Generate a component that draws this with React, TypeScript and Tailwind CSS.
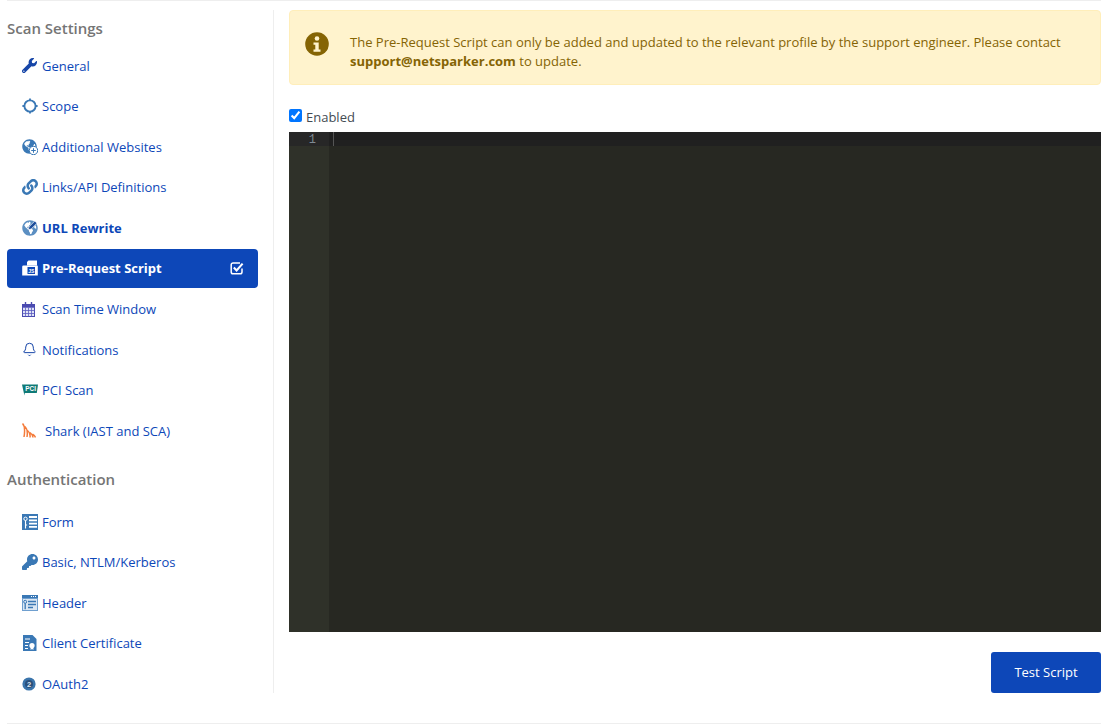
import React from "react";
import { FaWrench, FaLink, FaKey, FaGlobeAmericas } from "react-icons/fa";
import { Bell } from "lucide-react";

const BLUE = "#3a78b5";

function ScopeIcon() {
  return (
    <svg width="16" height="16" viewBox="0 0 16 16" fill="none" stroke={BLUE}>
      <circle cx="8" cy="8" r="5.6" strokeWidth="1.9" />
      <path d="M8 0.4v2.4M8 13.2v2.4M0.4 8h2.4M13.2 8h2.4" strokeWidth="1.8" />
    </svg>
  );
}

function GlobePlusIcon() {
  return (
    <span className="relative block h-4 w-4">
      <FaGlobeAmericas size={15} color={BLUE} />
      <svg className="absolute left-[7px] top-[7px]" width="9" height="9" viewBox="0 0 9 9">
        <circle cx="4.5" cy="4.5" r="4.2" fill="#fff" stroke={BLUE} />
        <path d="M4.5 2.2v4.6M2.2 4.5h4.6" stroke={BLUE} />
      </svg>
    </span>
  );
}

function GlobePenIcon() {
  return (
    <span className="relative block h-4 w-4">
      <FaGlobeAmericas size={16} color="#5b8fc2" />
      <svg className="absolute left-[4px] top-0" width="12" height="12" viewBox="0 0 12 12">
        <path d="M2 9.8 3 6.8 8.8 1l2.2 2.2L5.2 9Z" fill="#1f4f9c" stroke="#fff" strokeWidth="0.7" />
      </svg>
    </span>
  );
}

function ScriptIcon() {
  return (
    <svg width="16" height="16" viewBox="0 0 16 16">
      <path d="M6.5 0.5H15V5.5H5V2Z" fill="#fff" />
      <path d="M1.5 5.5H15a0.8 0.8 0 0 1 0.8 0.8V15.5H0.2V6.8A1.3 1.3 0 0 1 1.5 5.5Z" fill="#fff" />
      <rect x="5.5" y="7" width="7.5" height="7" fill="#0d47b8" />
      <text x="9.3" y="12.6" textAnchor="middle" fontSize="5" fill="#fff" fontFamily="Liberation Sans, sans-serif">JS</text>
    </svg>
  );
}

function CheckIcon() {
  return (
    <svg width="14" height="14" viewBox="0 0 14 14" fill="none" stroke="#fff">
      <path d="M12 7.5V11a1.8 1.8 0 0 1-1.8 1.8H3A1.8 1.8 0 0 1 1.2 11V3.8A1.8 1.8 0 0 1 3 2h7" strokeWidth="1.5" />
      <path d="M3.8 6.6 6.6 9.4 12.6 2.6" strokeWidth="2.1" />
    </svg>
  );
}

function CalendarIcon() {
  return (
    <svg width="13" height="15" viewBox="0 0 13 15" fill="none">
      <rect x="0.5" y="2.5" width="12" height="12" fill="#dfe3f6" stroke="#4a4ab0" />
      <path d="M0.5 5.5h12M0.5 8.5h12M0.5 11.5h12M3.5 5.5v9M6.5 5.5v9M9.5 5.5v9" stroke="#5a5cc0" strokeWidth="0.8" />
      <path d="M0.5 4h12" stroke="#4a4ab0" strokeWidth="2" />
      <path d="M3.5 0v3M9.5 0v3" stroke="#4a4ab0" strokeWidth="1.4" />
    </svg>
  );
}

function PciIcon() {
  return (
    <svg width="16" height="12" viewBox="0 0 16 12">
      <path d="M0 0.5h16l-1.2 8.5H2.8L2.4 11.5Z" fill="#0f7a77" />
      <text x="8.6" y="7.2" textAnchor="middle" fontSize="6.4" fontWeight="700" fill="#fff" fontFamily="Liberation Sans, sans-serif">PCI</text>
    </svg>
  );
}

function SharkIcon() {
  return (
    <svg width="14" height="15" viewBox="0 0 14 15" fill="none" stroke="#f47c3c" strokeWidth="1.5">
      <path d="M0.5 0.5C2.5 2.5 3.5 5 2 14M3 3.5C5 5.5 6 8 5 14M5.5 7.5C7.5 9 8.5 11 8 14.5M8 9.5C10 11 11 12.5 11 14.5M10.5 11C12 12 13 13 13.5 14.5" />
    </svg>
  );
}

function FormIcon() {
  return (
    <svg width="16" height="16" viewBox="0 0 16 16">
      <rect width="16" height="16" fill={BLUE} />
      <path d="M7 3h8M7 6.3h8M7 9.6h8M7 12.9h8" stroke="#fff" strokeWidth="1.8" />
      <circle cx="3.5" cy="4.8" r="1.7" fill="none" stroke="#fff" />
      <path d="M3.5 6.5v8M3.5 11h1.6" stroke="#fff" strokeWidth="1.1" />
    </svg>
  );
}

function HeaderIcon() {
  return (
    <svg width="16" height="16" viewBox="0 0 16 16">
      <rect width="16" height="16" fill="#6f9fcf" />
      <rect x="0" y="0" width="16" height="3" fill={BLUE} />
      <path d="M11 1.5h1M13 1.5h1M9 1.5h1" stroke="#fff" />
      <rect x="1" y="4" width="14" height="11" fill="#dbe7f3" />
      <path d="M6 6.5h8M6 9.5h8M6 12.5h5" stroke={BLUE} strokeWidth="1.6" />
      <circle cx="3.2" cy="6.8" r="1.5" fill="none" stroke={BLUE} />
      <path d="M3.2 8.3v6" stroke={BLUE} strokeWidth="1.3" />
    </svg>
  );
}

function CertificateIcon() {
  return (
    <svg width="16" height="16" viewBox="0 0 16 16">
      <path d="M1 0h9.5L14.5 4v12H1Z" fill={BLUE} />
      <path d="M3 4h5M3 7.5h4M3 10.5h3M3 13.5h3" stroke="#fff" />
      <circle cx="10" cy="10.5" r="2.6" fill="#fff" />
      <path d="M8.6 12v3l1.4-1 1.4 1v-3" fill="#fff" />
    </svg>
  );
}

function OAuthIcon() {
  return (
    <svg width="14" height="14" viewBox="0 0 14 14">
      <circle cx="7" cy="7" r="6.6" fill="#3a74ab" />
      <circle cx="7" cy="7" r="4" fill="#2b4f7a" />
      <text x="7" y="9.6" textAnchor="middle" fontSize="7.5" fontWeight="700" fill="#dfe8f2" fontFamily="Liberation Sans, sans-serif">2</text>
    </svg>
  );
}

type Item = { label: string; icon: React.ReactNode; bold?: boolean; active?: boolean; shifted?: boolean };

const scanItems: Item[] = [
  { label: "General", icon: <FaWrench size={15} color="#1746a8" /> },
  { label: "Scope", icon: <ScopeIcon /> },
  { label: "Additional Websites", icon: <GlobePlusIcon /> },
  { label: "Links/API Definitions", icon: <FaLink size={16} color={BLUE} /> },
  { label: "URL Rewrite", icon: <GlobePenIcon />, bold: true },
  { label: "Pre-Request Script", icon: <ScriptIcon />, active: true },
  { label: "Scan Time Window", icon: <CalendarIcon /> },
  { label: "Notifications", icon: <Bell size={15} color="#1746a8" strokeWidth={1.6} /> },
  { label: "PCI Scan", icon: <PciIcon /> },
  { label: "Shark (IAST and SCA)", icon: <SharkIcon />, shifted: true },
];

const authItems: Item[] = [
  { label: "Form", icon: <FormIcon /> },
  { label: "Basic, NTLM/Kerberos", icon: <FaKey size={16} color={BLUE} /> },
  { label: "Header", icon: <HeaderIcon /> },
  { label: "Client Certificate", icon: <CertificateIcon /> },
  { label: "OAuth2", icon: <OAuthIcon /> },
];

function NavRow({ item }: { item: Item }) {
  if (item.active) {
    return (
      <li className="flex h-[40.56px] w-[251px] items-center">
        <a className="flex h-[39px] w-full items-center rounded-[4px] bg-[#0d47b8] pb-[1px] pl-[15px] pr-[14px] font-bold text-white">
          <span className="flex w-[20px] shrink-0 items-center">{item.icon}</span>
          <span>{item.label}</span>
          <span className="ml-auto">
            <CheckIcon />
          </span>
        </a>
      </li>
    );
  }
  return (
    <li className="flex h-[40.56px] items-center pl-[15px] text-[#0d47b8]">
      <span className="flex w-[20px] shrink-0 items-center">{item.icon}</span>
      <span className={`${item.bold ? "font-bold" : ""} ${item.shifted ? "ml-[3px]" : ""}`}>{item.label}</span>
    </li>
  );
}

export default function App() {
  return (
    <div className="mx-[7px] w-[1094px] font-['Open_Sans',sans-serif] text-[13px] leading-[20px]">
      <div className="h-[1px] bg-[#eeeeee]" />
      <div className="flex items-start pt-[9px]">
        <aside className="h-[683px] w-[267px] shrink-0 border-r border-[#eeeeee]">
          <h2 className="pb-[6.5px] pt-[7px] text-[15px] font-semibold leading-[22px] text-[#757575]">Scan Settings</h2>
          <ul>
            {scanItems.map((item) => (
              <NavRow key={item.label} item={item} />
            ))}
          </ul>
          <h2 className="pb-[11.4px] pt-[17px] text-[15px] font-semibold leading-[22px] text-[#757575]">Authentication</h2>
          <ul>
            {authItems.map((item) => (
              <NavRow key={item.label} item={item} />
            ))}
          </ul>
        </aside>
        <main className="ml-[15px] flex-1">
          <div className="flex h-[75px] items-start rounded-[4px] border border-[#ffeeba] bg-[#fff3cd] pl-[15px] pr-[20px] pt-[20.5px] text-[#856404]">
            <svg width="24" height="24" viewBox="0 0 24 24" className="shrink-0">
              <circle cx="12" cy="12" r="11.8" fill="#856404" />
              <circle cx="12" cy="6.5" r="2.3" fill="#fff3cd" />
              <path d="M8.5 10.5h5.2v7h1.8v2.2h-7v-2.2h1.8v-4.8H8.5Z" fill="#fff3cd" />
            </svg>
            <p className="ml-[21px] pt-[1.5px] leading-[19px]">
              The Pre-Request Script can only be added and updated to the relevant profile by the support engineer. Please contact{" "}
              <strong className="font-bold">support@netsparker.com</strong> to update.
            </p>
          </div>
          <label className="mb-[6px] mt-[22px] flex h-[19px] items-center text-[#444b53]">
            <input type="checkbox" defaultChecked className="m-0 mb-[2px] h-[13px] w-[13px] accent-[#0075ff]" />
            <span className="ml-[4px]">Enabled</span>
          </label>
          <div className="flex h-[500px] bg-[#272822] font-['Liberation_Mono',monospace] text-[12px]">
            <div className="w-[40px] shrink-0 bg-[#2f3129] text-[#7f8a94]">
              <div className="h-[14px] bg-[#272727] pr-[13px] pt-[1px] text-right leading-[14px]">1</div>
            </div>
            <div className="flex-1">
              <div className="h-[14px] bg-[#202020] pl-[4px]">
                <div className="h-[14px] w-[1px] bg-[#555555]" />
              </div>
            </div>
          </div>
          <div className="mt-[20px] flex justify-end">
            <button className="h-[41px] w-[110px] rounded-[3px] bg-[#0d47b8] pb-[2px] text-white">Test Script</button>
          </div>
        </main>
      </div>
      <div className="mt-[30px] h-[1px] bg-[#eeeeee]" />
    </div>
  );
}
